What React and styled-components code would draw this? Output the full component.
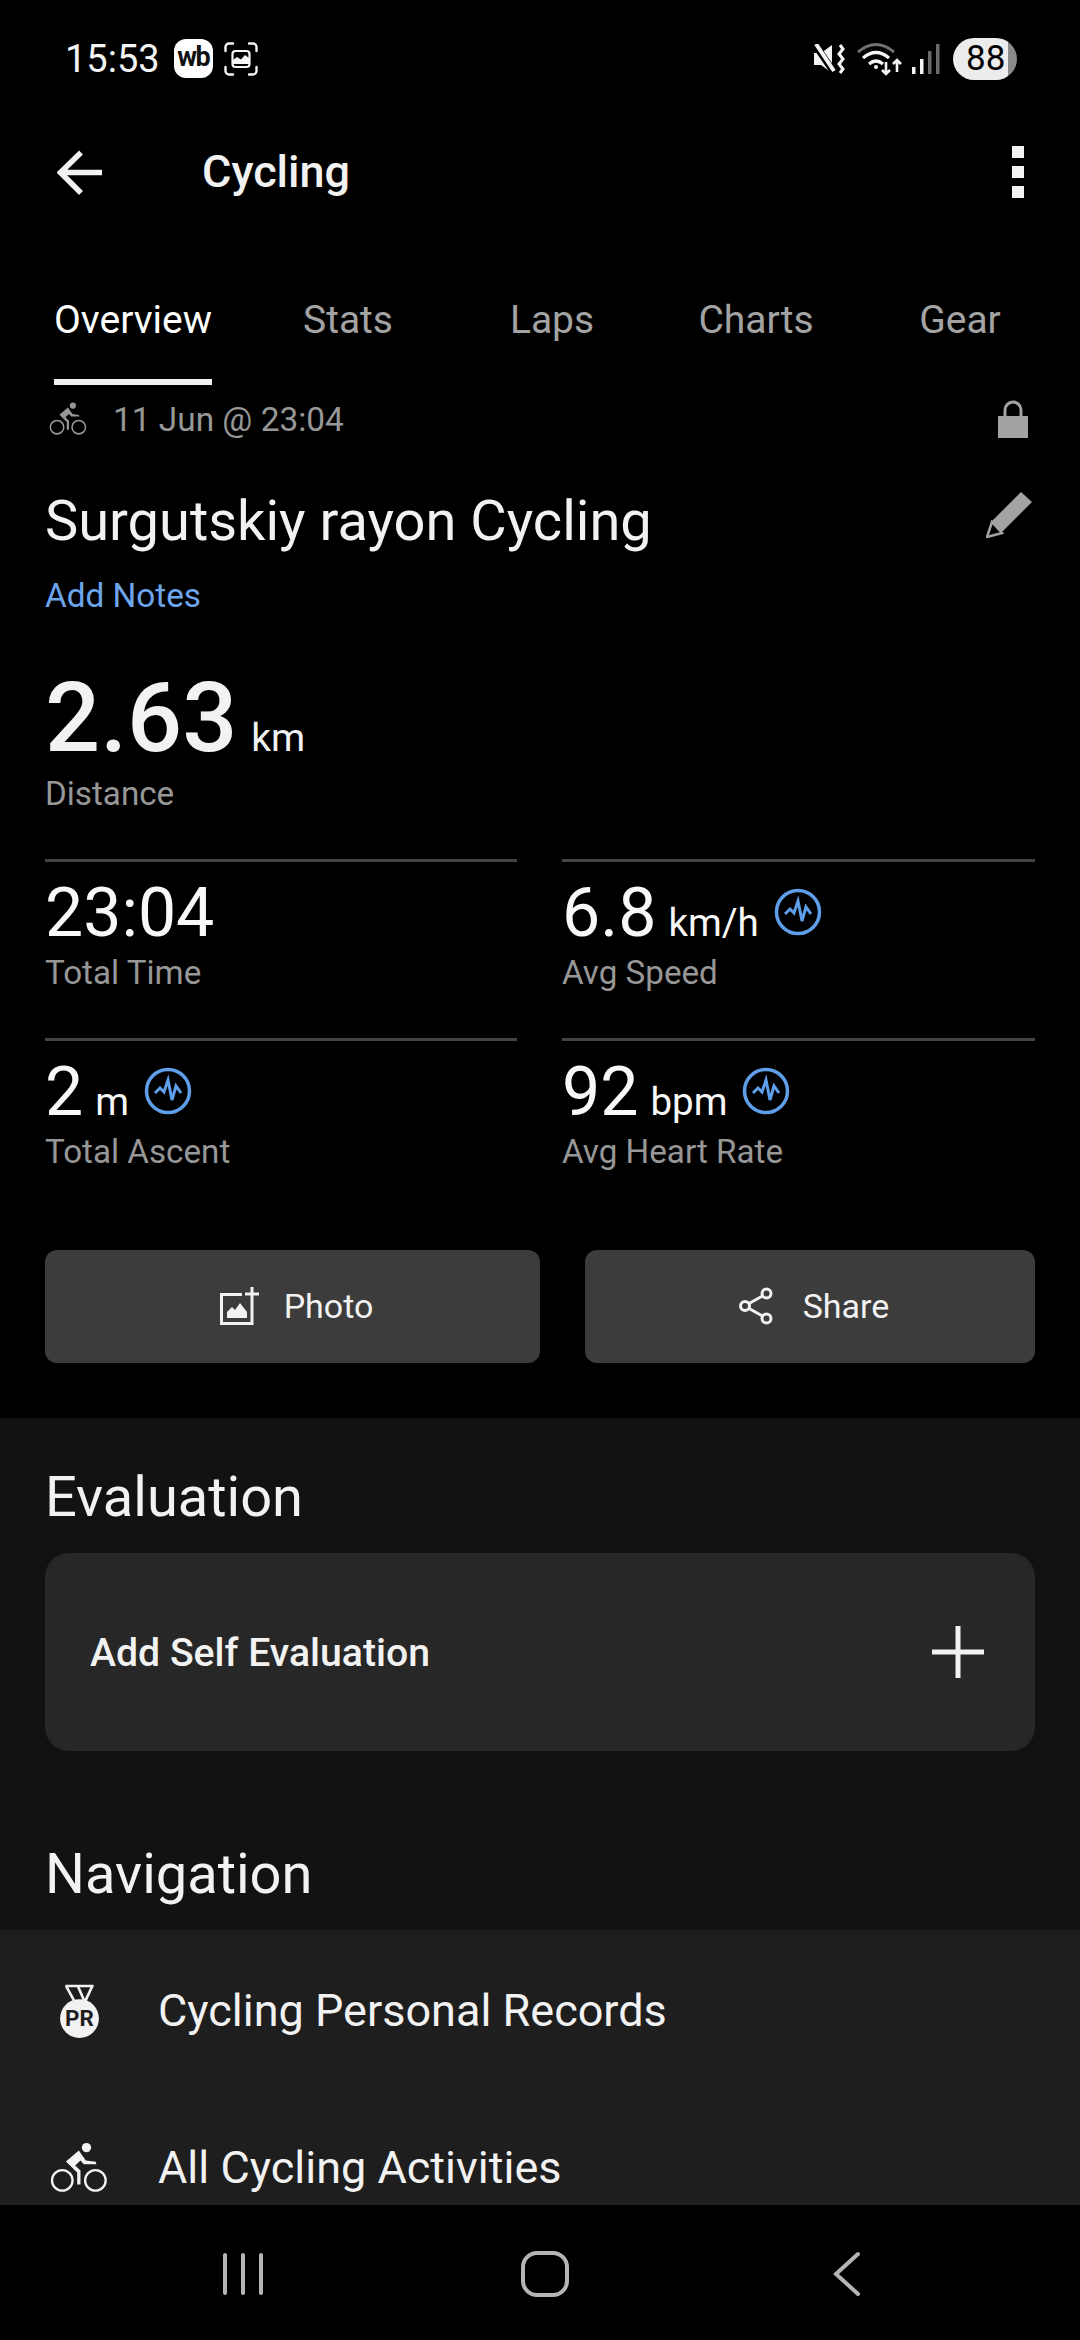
import React from "react";
import styled, { createGlobalStyle } from "styled-components";

const Global = createGlobalStyle`
  html, body { margin: 0; padding: 0; background: #000; }
  * { box-sizing: border-box; }
`;

const Page = styled.div`
  width: 1080px; height: 2340px; background: #000; color: #f2f2f2;
  font-family: Roboto, "Liberation Sans", sans-serif;
  display: flex; flex-direction: column; overflow: hidden;
`;
const Main = styled.main`
  flex: 1; min-height: 0; overflow: hidden; display: flex; flex-direction: column;
`;
const StatusBar = styled.div`
  height: 117px; flex: none; padding: 0 63px 0 65px; display: flex; align-items: center; justify-content: space-between;
`;
const StatusGroup = styled.div`display: flex; align-items: center;`;
const Clock = styled.span`font-size: 38px; line-height: 44px; color: #f5f5f5; margin-right: 14px;`;
const WbBadge = styled.span`
  width: 39px; height: 39px; border-radius: 12px; background: #fff; color: #111; font-size: 27px; font-weight: 700;
  letter-spacing: -1.5px; display: flex; align-items: center; justify-content: center; margin-right: 11px; padding-bottom: 3px;
`;
const Battery = styled.span`
  width: 64px; height: 42px; border-radius: 21px; margin-left: 13px; color: #000; font-size: 35px;
  background: linear-gradient(90deg, #ececec 0 55px, #8b8b8b 55px);
  display: flex; align-items: center; padding-left: 13px;
`;
const Toolbar = styled.div`
  height: 113px; flex: none; display: flex; align-items: center; padding: 0 56px 0 57px;
`;
const ToolbarTitle = styled.h1`
  margin: -3px 0 0 99px; font-size: 45px; line-height: 56px; font-weight: 500; flex: 1;
`;
const BackIcon = styled.svg`margin-top: -2px;`;
const Tabs = styled.nav`
  height: 155px; flex: none; padding-left: 54px; display: grid; grid-template-columns: 192px repeat(4, 204px);
`;
const Tab = styled.div`
  display: flex; justify-content: ${(p) => (p.$active ? "flex-start" : "center")};
`;
const TabLabel = styled.span`
  height: 155px; padding-top: 67px; font-size: 39px; line-height: 46px; color: ${(p) => (p.$active ? "#fff" : "#a3a3a3")};
  border-bottom: 6px solid ${(p) => (p.$active ? "#f2f2f2" : "transparent")};
`;
const MetaRow = styled.div`
  height: 68px; flex: none; padding: 0 52px 0 49px; display: flex; align-items: center; color: #979797; font-size: 33.4px;
`;
const MetaText = styled.span`margin-left: 26px; flex: 1;`;
const TitleRow = styled.div`
  height: 70px; margin-top: 33px; padding: 0 48px 0 45px; display: flex; align-items: center; justify-content: space-between;
`;
const ActivityName = styled.h2`margin: 0; font-size: 56px; line-height: 70px; font-weight: 400;`;
const Pencil = styled.svg`margin-top: -13px;`;
const AddNotes = styled.div`
  margin: 20px 0 0 45px; font-size: 33.3px; line-height: 40px; color: #6ea6ee;
`;
const BigValue = styled.div`
  margin: 46px 0 0 45px; height: 112px; display: flex; align-items: baseline;
  font-size: 97px; line-height: 112px; font-weight: 500;
`;
const BigUnit = styled.span`font-size: 39px; font-weight: 400; margin-left: 14px;`;
const Label = styled.div`
  font-size: 33.2px; line-height: 40px; color: #979797;
`;
const DistanceLabel = styled(Label)`margin: 0 0 45px 45px;`;
const StatGrid = styled.div`
  padding: 0 45px; display: grid; grid-template-columns: 472px 473px; column-gap: 45px; grid-auto-rows: 179px;
`;
const StatCell = styled.div`
  border-top: 3px solid #444; padding-top: 13px;
`;
const StatValue = styled.div`
  height: 76px; display: flex; align-items: baseline; font-size: 68px; line-height: 76px; color: #f8f8f8; margin-bottom: 2px;
`;
const StatUnit = styled.span`font-size: 38.5px; margin-left: 12px;`;
const InsightIcon = styled.svg`
  margin-left: 15px; align-self: flex-start; margin-top: 13px;
`;
const Actions = styled.div`
  margin-top: 33px; padding: 0 45px 55px; display: grid; grid-template-columns: 495px 450px; column-gap: 45px;
`;
const ActionButton = styled.button`
  height: 113px; border: 0; border-radius: 12px; background: #3c3c3c; color: #f2f2f2; font: inherit; font-size: 34px;
  padding: 0 0 2px 8px;
  display: flex; align-items: center; justify-content: center; gap: ${(p) => p.$gap}px;
`;
const Lower = styled.section`
  flex: 1; background: #121212; padding-top: 47px;
`;
const SectionTitle = styled.h3`
  margin: ${(p) => p.$top || 0}px 0 0 45px; font-size: 56px; line-height: 64px; font-weight: 400;
`;
const EvalCard = styled.div`
  margin: 24px 45px 0; height: 198px; border-radius: 24px; background: #272727; padding: 0 50px 0 45px;
  display: flex; align-items: center; justify-content: space-between; font-size: 39.2px; font-weight: 500;
`;
const EvalText = styled.span`margin-top: 2px;`;
const NavList = styled.div`margin-top: 24px; background: #1e1e1e; padding-top: 2px;`;
const NavRow = styled.div`
  height: 157px; display: flex; align-items: center; font-size: 45px;
`;
const NavIconSlot = styled.div`
  width: 158px; padding-left: 50px; flex: none; display: flex;
`;
const SystemBar = styled.div`
  height: 135px; flex: none; background: #000;
`;
const SystemIcons = styled.div`
  padding: 46px 219px 0 222px; display: flex; justify-content: space-between; align-items: flex-start;
`;
const Dots = styled.div`display: flex; flex-direction: column; gap: 8px; margin-top: -4px;`;
const Dot = styled.span`display: block; width: 12px; height: 12px; background: #f2f2f2;`;
const HomeIcon = styled.svg`margin-right: 6px;`;

const BikeIcon = ({ w = 58, h = 52, c = "#f2f2f2" }) => (
  <svg width={w} height={h} viewBox="90 545 175 155" fill="none">
    <circle cx="127" cy="660" r="31" stroke={c} strokeWidth="7" />
    <circle cx="227" cy="660" r="31" stroke={c} strokeWidth="7" />
    <circle cx="200" cy="561" r="14" fill={c} />
    <path d="M138 603 L177 570 L198 600 L228 604 L230 611 L192 611 L182 600 L166 615 L182 630 L182 672 L172 672 L172 636 Z" fill={c} />
  </svg>
);
const Insight = () => (
  <InsightIcon width="48" height="48" viewBox="0 0 48 48" fill="none" stroke="#5f9fe9">
    <circle cx="24" cy="24" r="21.5" strokeWidth="3.5" />
    <path d="M11 26 L16 21 L20 25 L24 13 L28 33 L32 19 L37 26" strokeWidth="3" strokeLinejoin="miter" />
  </InsightIcon>
);

const stats = [
  { v: "23:04", l: "Total Time" },
  { v: "6.8", u: "km/h", l: "Avg Speed", i: true },
  { v: "2", u: "m", l: "Total Ascent", i: true },
  { v: "92", u: "bpm", l: "Avg Heart Rate", i: true },
];

export default function App() {
  return (
    <Page>
      <Global />
      <Main>
        <StatusBar>
          <StatusGroup>
            <Clock>15:53</Clock>
            <WbBadge>wb</WbBadge>
            <svg width="34" height="34" viewBox="0 0 34 34" fill="none">
              <path d="M1.5 9V5a3.5 3.5 0 0 1 3.5-3.5h4M25 1.5h4A3.5 3.5 0 0 1 32.5 5v4M32.5 25v4a3.5 3.5 0 0 1-3.5 3.5h-4M9 32.5H5A3.5 3.5 0 0 1 1.5 29v-4" stroke="#f5f5f5" strokeWidth="2.4" strokeLinecap="round" />
              <rect x="8.5" y="9" width="17" height="16" rx="3" stroke="#f5f5f5" strokeWidth="2.2" />
              <path d="M9 22v-4l4-3 4 2.5 4-4.5 4 3v6z" fill="#f5f5f5" />
            </svg>
          </StatusGroup>
          <StatusGroup>
            <svg width="32" height="30" viewBox="0 0 32 30" style={{ marginRight: 11 }}>
              <path d="M0 9h7l11-8v28l-11-8H0z" fill="#f5f5f5" />
              <path d="M0 -1 L21 30" stroke="#000" strokeWidth="7" />
              <path d="M2 0 L20 27" stroke="#f5f5f5" strokeWidth="4" />
              <path d="M26 1 L29 5 L25 10 L29 15 L25 20 L29 25 L26 29" stroke="#f5f5f5" strokeWidth="3" fill="none" />
            </svg>
            <svg width="46" height="34" viewBox="0 0 46 34" fill="none" style={{ marginRight: 9 }}>
              <path d="M1 10 Q19 -5 37 10" stroke="#707070" strokeWidth="3" />
              <path d="M6 16 Q19 5 32 16" stroke="#f5f5f5" strokeWidth="3.2" />
              <path d="M12 22 Q19 16 26 22" stroke="#f5f5f5" strokeWidth="3.2" />
              <circle cx="19" cy="25" r="2" fill="#f5f5f5" />
              <path d="M29 20v12M25 28l4 4 4-4M40 30V19M36 22l4-4 4 4" stroke="#f5f5f5" strokeWidth="2.6" />
            </svg>
            <svg width="28" height="30" viewBox="0 0 28 30">
              <rect x="0" y="23" width="3.5" height="7" fill="#f5f5f5" />
              <rect x="8" y="15" width="3.5" height="15" fill="#f5f5f5" />
              <rect x="16" y="7" width="3.5" height="23" fill="#6a6a6a" />
              <rect x="24" y="0" width="3.5" height="30" fill="#6a6a6a" />
            </svg>
            <Battery>88</Battery>
          </StatusGroup>
        </StatusBar>
        <Toolbar>
          <BackIcon width="46" height="46" viewBox="0 0 46 46" fill="none">
            <path d="M45 22.5H4M24 2.5L3.5 22.5L24 43" stroke="#f2f2f2" strokeWidth="5.5" />
          </BackIcon>
          <ToolbarTitle>Cycling</ToolbarTitle>
          <Dots><Dot /><Dot /><Dot /></Dots>
        </Toolbar>
        <Tabs>
          <Tab $active><TabLabel $active>Overview</TabLabel></Tab>
          <Tab><TabLabel>Stats</TabLabel></Tab>
          <Tab><TabLabel>Laps</TabLabel></Tab>
          <Tab><TabLabel>Charts</TabLabel></Tab>
          <Tab><TabLabel>Gear</TabLabel></Tab>
        </Tabs>
        <MetaRow>
          <BikeIcon w={38} h={34} c="#979797" />
          <MetaText>11 Jun @ 23:04</MetaText>
          <svg width="30" height="38" viewBox="0 0 30 38" fill="none">
            <path d="M7 17V10a8 8 0 0 1 16 0v7" stroke="#a3a3a3" strokeWidth="3" />
            <rect x="0" y="16" width="30" height="22" fill="#a3a3a3" />
          </svg>
        </MetaRow>
        <TitleRow>
          <ActivityName>Surgutskiy rayon Cycling</ActivityName>
          <Pencil width="46" height="46" viewBox="0 0 46 46" fill="none">
            <path d="M35 0 L46 10 L16 40 L8 32 L6 29 Z" fill="#a3a3a3" />
            <path d="M6 30 L1 45 L16 41 Z" stroke="#a3a3a3" strokeWidth="2.5" />
          </Pencil>
        </TitleRow>
        <AddNotes>Add Notes</AddNotes>
        <BigValue>2.63<BigUnit>km</BigUnit></BigValue>
        <DistanceLabel>Distance</DistanceLabel>
        <StatGrid>
          {stats.map((s) => (
            <StatCell key={s.l}>
              <StatValue>
                {s.v}
                {s.u && <StatUnit>{s.u}</StatUnit>}
                {s.i && <Insight />}
              </StatValue>
              <Label>{s.l}</Label>
            </StatCell>
          ))}
        </StatGrid>
        <Actions>
          <ActionButton $gap={24}>
            <svg width="40" height="38" viewBox="0 0 40 38" fill="none">
              <path d="M22 7.5H1.5V36.5H32V14" stroke="#f2f2f2" strokeWidth="3" />
              <path d="M32 0V14M25 7H39" stroke="#f2f2f2" strokeWidth="3" />
              <path d="M7 31V25L12 20L15 23L20 16L27 25V31Z" fill="#f2f2f2" />
            </svg>
            Photo
          </ActionButton>
          <ActionButton $gap={30}>
            <svg width="34" height="38" viewBox="0 0 34 38" fill="none" stroke="#f2f2f2" strokeWidth="3">
              <circle cx="27.5" cy="6.5" r="4.5" />
              <circle cx="6" cy="19" r="4.5" />
              <circle cx="27.5" cy="31.5" r="4.5" />
              <path d="M10 16.5L23.5 9M10 21.5L23.5 29" />
            </svg>
            Share
          </ActionButton>
        </Actions>
        <Lower>
          <SectionTitle>Evaluation</SectionTitle>
          <EvalCard>
            <EvalText>Add Self Evaluation</EvalText>
            <svg width="54" height="54" viewBox="0 0 54 54">
              <path d="M27 1V53M1 27H53" stroke="#f2f2f2" strokeWidth="5" />
            </svg>
          </EvalCard>
          <SectionTitle $top={91}>Navigation</SectionTitle>
          <NavList>
            <NavRow>
              <NavIconSlot>
                <svg width="58" height="56" viewBox="90 62 175 170">
                  <path d="M136 71H222M138 71L165 120M174 71L195 120M218 71L195 120" stroke="#f2f2f2" strokeWidth="8" fill="none" />
                  <circle cx="179" cy="170" r="59" fill="#f2f2f2" />
                  <text x="179" y="194" textAnchor="middle" fontFamily="Roboto, sans-serif" fontWeight="700" fontSize="68" fill="#1e1e1e">PR</text>
                </svg>
              </NavIconSlot>
              Cycling Personal Records
            </NavRow>
            <NavRow>
              <NavIconSlot><BikeIcon /></NavIconSlot>
              All Cycling Activities
            </NavRow>
          </NavList>
        </Lower>
      </Main>
      <SystemBar>
        <SystemIcons>
          <svg width="42" height="44" viewBox="0 0 42 44" stroke="#b5b5b5" strokeWidth="4" strokeLinecap="round">
            <path d="M3 4V42M21 4V42M39 4V42" />
          </svg>
          <HomeIcon width="48" height="46" viewBox="0 0 48 46" fill="none">
            <rect x="2" y="2" width="44" height="42" rx="14" stroke="#b5b5b5" strokeWidth="4" />
          </HomeIcon>
          <svg width="30" height="46" viewBox="0 0 30 46" fill="none">
            <path d="M27 3L5 23L27 43" stroke="#b5b5b5" strokeWidth="4" strokeLinecap="round" />
          </svg>
        </SystemIcons>
      </SystemBar>
    </Page>
  );
}
